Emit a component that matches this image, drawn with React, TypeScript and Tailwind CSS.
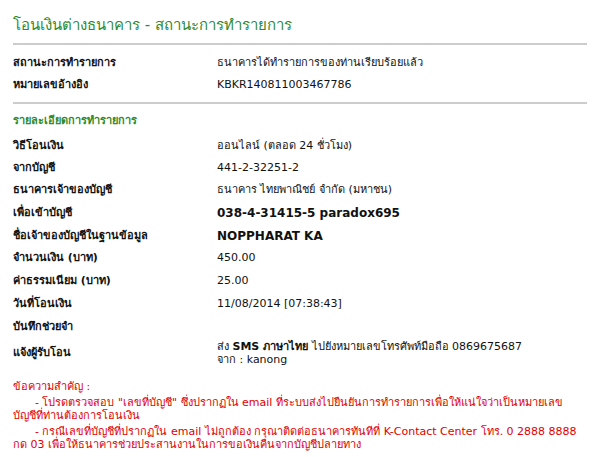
import React from "react";

const rows1 = [
  { label: "สถานะการทำรายการ", value: "ธนาคารได้ทำรายการของท่านเรียบร้อยแล้ว", h: "h-[22px]" },
  { label: "หมายเลขอ้างอิง", value: "KBKR140811003467786", h: "h-[22px]" },
];

export default function App() {
  return (
    <div
      className="w-[592px] h-[457px] bg-white px-[13px] pt-[15px] text-[11px] text-[#111]"
      style={{ fontFamily: '"DejaVu Sans", Tahoma, "Noto Sans", sans-serif' }}
    >
      <div className="h-[20px] flex items-center text-[15px] text-[#2e8b2e]">
        โอนเงินต่างธนาคาร - สถานะการทำรายการ
      </div>
      <div className="mt-[8px] h-[2px] w-[574px] bg-[#cccccc]" />

      <div className="mt-[7px]">
        {rows1.map((r) => (
          <div key={r.label} className={`flex items-center ${r.h}`}>
            <div className="w-[204px] font-bold">{r.label}</div>
            <div>{r.value}</div>
          </div>
        ))}
      </div>
      <div className="mt-[6px] h-[2px] w-[574px] bg-[#cccccc]" />

      <div className="mt-[7px] h-[20px] flex items-center text-[11px] font-bold text-[#2e8b2e]">
        รายละเอียดการทำรายการ
      </div>

      <div className="mt-[4px]">
        <div className="flex items-center h-[22px]">
          <div className="w-[204px] font-bold">วิธีโอนเงิน</div>
          <div>ออนไลน์ (ตลอด 24 ชั่วโมง)</div>
        </div>
        <div className="flex items-center h-[22px]">
          <div className="w-[204px] font-bold">จากบัญชี</div>
          <div>441-2-32251-2</div>
        </div>
        <div className="flex items-center h-[22px]">
          <div className="w-[204px] font-bold">ธนาคารเจ้าของบัญชี</div>
          <div>ธนาคาร ไทยพาณิชย์ จำกัด (มหาชน)</div>
        </div>
        <div className="flex items-center h-[24px]">
          <div className="w-[204px] font-bold">เพื่อเข้าบัญชี</div>
          <div className="text-[12px] font-bold">038-4-31415-5 paradox695</div>
        </div>
        <div className="flex items-center h-[22px]">
          <div className="w-[204px] font-bold">ชื่อเจ้าของบัญชีในฐานข้อมูล</div>
          <div className="text-[12px] font-bold">NOPPHARAT KA</div>
        </div>
        <div className="flex items-center h-[23px]">
          <div className="w-[204px] font-bold">จำนวนเงิน (บาท)</div>
          <div>450.00</div>
        </div>
        <div className="flex items-center h-[23px]">
          <div className="w-[204px] font-bold">ค่าธรรมเนียม (บาท)</div>
          <div>25.00</div>
        </div>
        <div className="flex items-center h-[22px]">
          <div className="w-[204px] font-bold">วันที่โอนเงิน</div>
          <div>11/08/2014 [07:38:43]</div>
        </div>
        <div className="flex items-center h-[24px]">
          <div className="w-[204px] font-bold">บันทึกช่วยจำ</div>
          <div></div>
        </div>
        <div className="flex items-center h-[28px]">
          <div className="w-[204px] font-bold">แจ้งผู้รับโอน</div>
          <div className="leading-[13px]">
            <div>
              ส่ง <span className="font-bold">SMS ภาษาไทย</span> ไปยังหมายเลขโทรศัพท์มือถือ 0869675687
            </div>
            <div>จาก : kanong</div>
          </div>
        </div>
      </div>

      <div className="mt-[13px] text-[#e00000] leading-[13px]">
        <div>ข้อความสำคัญ :</div>
        <div className="mt-[3px]">
          <span className="pl-[22px]">- โปรดตรวจสอบ "เลขที่บัญชี" ซึ่งปรากฏใน email ที่ระบบส่งไปยืนยันการทำรายการเพื่อให้แน่ใจว่าเป็นหมายเลขบัญชีที่ท่านต้องการโอนเงิน</span>
        </div>
        <div className="mt-[3px]">
          <span className="pl-[22px]">- กรณีเลขที่บัญชีที่ปรากฏใน email ไม่ถูกต้อง กรุณาติดต่อธนาคารทันทีที่ K-Contact Center โทร. 0 2888 8888 กด 03 เพื่อให้ธนาคารช่วยประสานงานในการขอเงินคืนจากบัญชีปลายทาง</span>
        </div>
      </div>
    </div>
  );
}
